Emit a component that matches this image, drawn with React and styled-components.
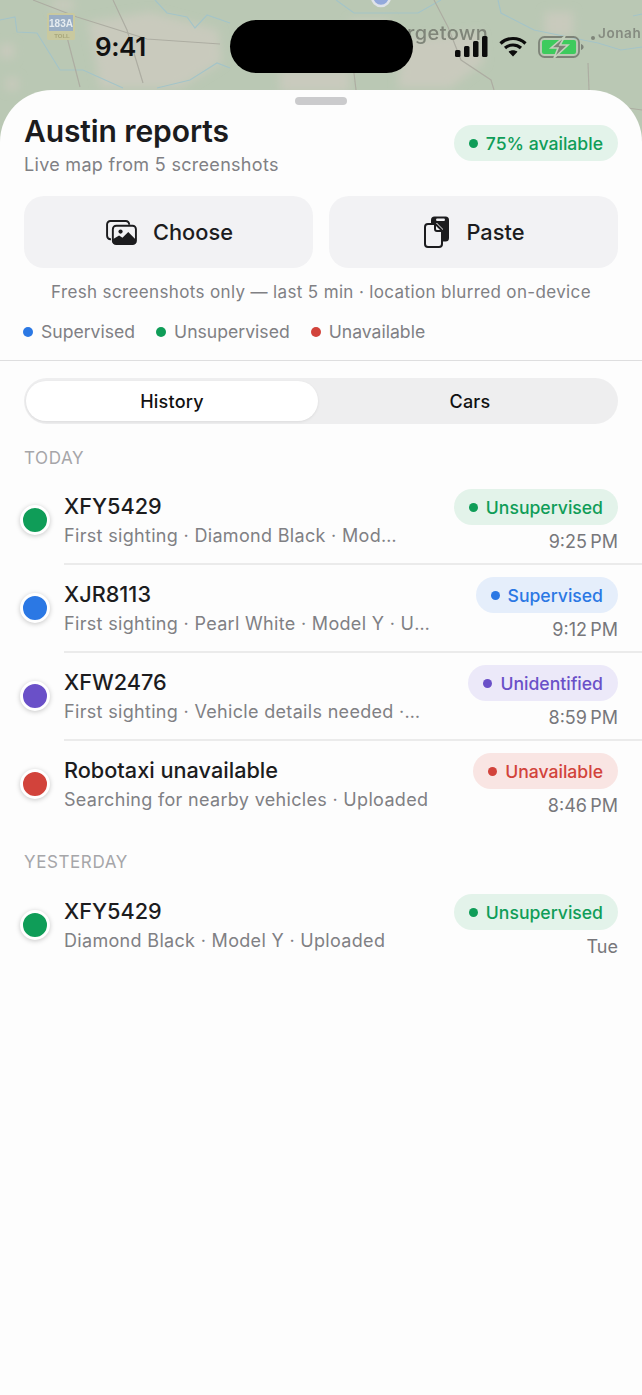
import React from 'react';
import styled, {createGlobalStyle} from 'styled-components';

const GlobalStyle = createGlobalStyle`
    * { box-sizing: border-box; }
    html, body { margin: 0; padding: 0; background: #fdfdfd; }
    body {
        font-family: Inter, "Noto Sans", "Liberation Sans", sans-serif;
        color: #1c1c1e;
        -webkit-font-smoothing: antialiased;
    }
`

const Page = styled.div`
    position: relative;
    width: 642px;
    height: 1395px;
    overflow: hidden;
    background: #fdfdfd;
`

const MapLayer = styled.svg`
    position: absolute;
    top: 0;
    left: 0;
    width: 642px;
    height: 150px;
`

const StatusBar = styled.div`
    position: relative;
    height: 90px;
    padding-top: 20px;
    display: grid;
    grid-template-columns: 230px 183px 1fr;
`

const Clock = styled.div`
    padding: 11px 0 0 95px;
    font-size: 26px;
    line-height: 32px;
    font-weight: 600;
    letter-spacing: -0.4px;
    color: #111;
`

const Island = styled.div`
    height: 53px;
    border-radius: 27px;
    background: #000;
`

const StatusIcons = styled.div`
    display: flex;
    align-items: center;
    height: 53px;
    padding-left: 42px;
    gap: 11px;
`

const Sheet = styled.div`
    position: relative;
    min-height: 1305px;
    border-radius: 52px 52px 0 0;
    background: #fdfdfd;
    padding-top: 7px;
`

const Handle = styled.div`
    width: 52px;
    height: 8px;
    margin: 0 auto;
    border-radius: 4px;
    background: #cbcbcd;
`

const Header = styled.div`
    display: flex;
    justify-content: space-between;
    padding: 8px 24px 0;
`

const Title = styled.h1`
    margin: 0;
    font-size: 30px;
    line-height: 36px;
    font-weight: 600;
    letter-spacing: -0.1px;
    color: #1c1c1e;
`

const Subtitle = styled.p`
    margin: 4px 0 0;
    font-size: 18px;
    line-height: 24px;
    letter-spacing: 0.3px;
    color: #808084;
`

const tones = {
    green: {fg: '#0f9d58', bg: '#e3f3ea'},
    blue: {fg: '#2b78e4', bg: '#e5eefb'},
    purple: {fg: '#6a50c8', bg: '#ece9f9'},
    red: {fg: '#d2433b', bg: '#f9e5e3'},
}

const Pill = styled.div`
    display: inline-flex;
    align-items: center;
    flex-shrink: 0;
    height: 36px;
    padding: 0 15px;
    gap: 8px;
    border-radius: 18px;
    font-size: 17.6px;
    font-weight: 500;
    white-space: nowrap;
    color: ${p => tones[p.$tone].fg};
    background: ${p => tones[p.$tone].bg};
`

const HeaderPill = styled(Pill)`
    margin-top: 12px;
`

const PillDot = styled.span`
    width: 9px;
    height: 9px;
    border-radius: 50%;
    background: currentColor;
`

const Actions = styled.div`
    display: grid;
    grid-template-columns: 1fr 1fr;
    gap: 16px;
    padding: 0 24px;
    margin-top: 19px;
`

const ActionButton = styled.button`
    display: flex;
    align-items: center;
    justify-content: center;
    gap: 16px;
    height: 72px;
    padding: 0 0 0 2px;
    border: 0;
    border-radius: 20px;
    background: #f2f2f4;
    color: #1c1c1e;
    font-family: inherit;
    font-size: 21.8px;
    font-weight: 500;
`

const Note = styled.p`
    margin: 12px 0 0;
    text-align: center;
    font-size: 17px;
    line-height: 24px;
    letter-spacing: 0.36px;
    color: #808084;
`

const Legend = styled.div`
    display: flex;
    gap: 21px;
    padding: 0 24px 16px 23px;
    margin-top: 16px;
    border-bottom: 1px solid #dededf;
`

const LegendItem = styled.div`
    display: flex;
    align-items: center;
    gap: 8px;
    font-size: 17.6px;
    line-height: 24px;
    color: #808084;
`

const LegendDot = styled.span`
    width: 10px;
    height: 10px;
    border-radius: 50%;
    background: ${p => tones[p.$tone].fg};
`

const Segments = styled.div`
    display: grid;
    grid-template-columns: 292px 1fr;
    height: 46px;
    margin: 17px 24px 0;
    padding: 3px 0 3px 2px;
    border-radius: 23px;
    background: #eeeeef;
`

const Segment = styled.div`
    display: flex;
    align-items: center;
    justify-content: center;
    border-radius: 20px;
    font-size: 18px;
    font-weight: 500;
    letter-spacing: 0.2px;
    color: #111;
    padding-left: ${p => (p.$active ? 0 : 4)}px;
    background: ${p => (p.$active ? '#fff' : 'transparent')};
    box-shadow: ${p => (p.$active ? '0 1px 3px rgba(0, 0, 0, 0.08)' : 'none')};
`

const GroupLabel = styled.div`
    padding: 0 24px;
    margin: ${p => p.$top}px 0 ${p => p.$bottom}px;
    font-size: 17px;
    line-height: 22px;
    letter-spacing: 0.6px;
    color: #a6a6a9;
`

const Row = styled.div`
    display: flex;
    align-items: center;
    gap: 14px;
    height: 88px;
    padding-left: 20px;
`

const MarkerDot = styled.span`
    flex-shrink: 0;
    width: 30px;
    height: 30px;
    margin-bottom: 2px;
    border: 3px solid #fff;
    border-radius: 50%;
    background: ${p => tones[p.$tone].fg};
    box-shadow: 0 1px 5px rgba(0, 0, 0, 0.22);
`

const RowBody = styled.div`
    flex: 1;
    min-width: 0;
    height: 100%;
    display: flex;
    justify-content: space-between;
    gap: 30px;
    padding: 12px 24px 0 0;
    border-bottom: ${p => (p.$last ? '0' : '2px solid #ebebeb')};
`

const RowText = styled.div`
    min-width: 0;
    padding-top: 4px;
`

const RowTitle = styled.div`
    font-size: 21.7px;
    line-height: 26px;
    font-weight: 500;
    color: #1c1c1e;
`

const RowSub = styled.div`
    margin-top: 4px;
    max-width: ${p => p.$clip || 400}px;
    font-size: 18px;
    line-height: 26px;
    letter-spacing: 0.32px;
    color: #808084;
    white-space: nowrap;
    overflow: hidden;
    text-overflow: ellipsis;
`

const RowMeta = styled.div`
    display: flex;
    flex-direction: column;
    align-items: flex-end;
    flex-shrink: 0;
`

const RowTime = styled.div`
    margin-top: 6px;
    font-size: 18px;
    line-height: 22px;
    color: #77777b;
`

const PhotosIcon = () => (
    <svg width="31" height="25" viewBox="0 0 32 26" fill="none">
        <path d="M5 20H4.500A3.500 3.500 0 0 1 1 16.500V4.500A3.500 3.500 0 0 1 4.500 1H20.500A3.500 3.500 0 0 1 24 4.500V5" stroke="#1c1c1e" strokeWidth="2" />
        <rect x="7" y="6" width="24" height="19" rx="3.500" stroke="#1c1c1e" strokeWidth="2" />
        <circle cx="15" cy="12" r="2.200" fill="#1c1c1e" />
        <path d="M7 20l6.500-4 3.500 2.500 6-6 8 8V22a3 3 0 0 1-3 3H10a3 3 0 0 1-3-3z" fill="#1c1c1e" />
    </svg>
)

const PasteIcon = () => (
    <svg width="26" height="32" viewBox="0 0 26 32" fill="none">
        <path d="M7 7V4a3.500 3.500 0 0 1 3.500-3.500h11A3.500 3.500 0 0 1 25 4v18a3.500 3.500 0 0 1-3.500 3.500H19V13l-6-6z" fill="#1c1c1e" />
        <rect x="12" y="2.500" width="9" height="2.400" rx="1.200" fill="#f2f2f4" />
        <path d="M4 8H11.500L18 14.500V28a3 3 0 0 1-3 3H4a3 3 0 0 1-3-3V11a3 3 0 0 1 3-3z" fill="#f2f2f4" stroke="#1c1c1e" strokeWidth="2" />
        <path d="M11 8.500V13a2 2 0 0 0 2 2h4.500" stroke="#1c1c1e" strokeWidth="2" />
    </svg>
)

const SignalIcon = () => (
    <svg width="33" height="21" viewBox="0 0 33 21" fill="#0c0c0c">
        <rect x="0" y="14" width="5.500" height="7" rx="1.500" />
        <rect x="9" y="10" width="5.500" height="11" rx="1.500" />
        <rect x="18" y="5" width="5.500" height="16" rx="1.500" />
        <rect x="27" y="0" width="5.500" height="21" rx="1.500" />
    </svg>
)

const WifiIcon = () => (
    <svg width="28" height="21" viewBox="0 0 28 21" fill="none" stroke="#0c0c0c" strokeWidth="3.200">
        <path d="M1.500 7.500C8.500 .8 19.500 .8 26.500 7.500" />
        <path d="M6 12c4.500-4 11.500-4 16 0" />
        <path d="M14 20.500L9.500 15.800c2.600-2 6.400-2 9 0z" fill="#0c0c0c" stroke="none" />
    </svg>
)

const BatteryIcon = () => (
    <svg width="46" height="22" viewBox="0 0 46 22">
        <rect x="1" y="1" width="40" height="20" rx="5.500" fill="none" stroke="#7d8378" strokeWidth="1.800" />
        <path d="M4 6a2 2 0 0 1 2-2h30a2 2 0 0 1 2 2v10a2 2 0 0 1-2 2H6a2 2 0 0 1-2-2z" fill="#3dcb5d" />
        <path d="M43 8v6c1.600-.5 2.600-1.600 2.600-3s-1-2.500-2.600-3z" fill="#7d8378" />
        <path d="M27 0L13 12h7l-4 10 14-13h-8z" fill="#7d8378" stroke="#c3d0bc" strokeWidth="1.600" />
    </svg>
)

const MapArt = () => (
    <MapLayer viewBox="0 0 642 150">
        <defs>
            <filter id="soft"><feGaussianBlur stdDeviation="5" /></filter>
            <filter id="line"><feGaussianBlur stdDeviation="0.6" /></filter>
        </defs>
        <rect width="642" height="150" fill="#bac8b4" />
        <g filter="url(#soft)" fill="#c9cabd">
            <path d="M88 22L150 12L218 30L222 62L180 88H100L95 55z" />
            <path d="M402 40L480 32L484 62L450 88H398z" />
            <path d="M545 12h28v24h-28z" />
            <path d="M52 0h22v10H52z" />
            <path d="M0 44h14v14H0z" />
            <path d="M6 78h12v12H6z" />
            <path d="M280 70h70v22h-70z" />
            <path d="M350 20h40v22h-40z" />
        </g>
        <g filter="url(#line)">
            <g fill="none" stroke="#a4c4c8" strokeWidth="1.200">
                <path d="M0 20L15 17 17 32 37 33 60 70 83 70 123 88" />
                <path d="M155 0L167 13 187 17 195 28 207 15 230 23" />
                <path d="M157 88L190 80 217 63 230 68" />
                <path d="M336 0L354 13 391 13 418 13 441 0" />
                <path d="M498 0L501 13 534 30 568 37 598 43 621 50 642 47" />
                <path d="M633 16L642 14" />
            </g>
            <g fill="none" stroke="#adada2" strokeWidth="1.200">
                <path d="M33 0L77 17 147 39 220 44" />
                <path d="M113 0L127 30 143 83" />
                <path d="M67 37L80 87" />
                <path d="M434 0L448 27 461 60 491 80 494 90" />
                <path d="M354 73L356 90" />
                <path d="M588 63L589 90" />
                <path d="M621 107L642 110" />
            </g>
            <circle cx="381" cy="-3" r="9" fill="#93a9dc" stroke="#dfe3e9" strokeWidth="2.500" />
            <rect x="47" y="13" width="28" height="27" rx="2" fill="#c9c99f" />
            <rect x="49" y="15" width="24" height="16" fill="#9aaec4" />
            <text x="61" y="27" textAnchor="middle" fontSize="10" fontWeight="700" fill="#e6ecf0" fontFamily="Liberation Sans, sans-serif">183A</text>
            <text x="62" y="38" textAnchor="middle" fontSize="6" fontWeight="700" fill="#a8a67a" fontFamily="Liberation Sans, sans-serif">TOLL</text>
            <text x="367" y="40" fontSize="20" fontWeight="500" letterSpacing="0.4" fill="#7f8579" fontFamily="Inter, sans-serif">Georgetown</text>
            <circle cx="593" cy="38" r="2" fill="#7f8579" />
            <text x="598" y="38" fontSize="13.500" fontWeight="600" letterSpacing="0.6" fill="#858b80" fontFamily="Inter, sans-serif">Jonah</text>
        </g>
    </MapLayer>
)

const legend = [
    {tone: 'blue', label: 'Supervised'},
    {tone: 'green', label: 'Unsupervised'},
    {tone: 'red', label: 'Unavailable'},
]

const today = [
    {tone: 'green', title: 'XFY5429', sub: 'First sighting · Diamond Black · Model Y · Uploaded', clip: 335, status: 'Unsupervised', time: '9:25\u202FPM'},
    {tone: 'blue', title: 'XJR8113', sub: 'First sighting · Pearl White · Model Y · Uploaded', clip: 366, status: 'Supervised', time: '9:12\u202FPM'},
    {tone: 'purple', title: 'XFW2476', sub: 'First sighting · Vehicle details needed · Uploaded', clip: 357, status: 'Unidentified', time: '8:59\u202FPM'},
    {tone: 'red', title: 'Robotaxi unavailable', sub: 'Searching for nearby vehicles · Uploaded', status: 'Unavailable', time: '8:46\u202FPM'},
]

const yesterday = [
    {tone: 'green', title: 'XFY5429', sub: 'Diamond Black · Model Y · Uploaded', status: 'Unsupervised', time: 'Tue'},
]

const ReportRow = ({item, last}) => (
    <Row>
        <MarkerDot $tone={item.tone} />
        <RowBody $last={last}>
            <RowText>
                <RowTitle>{item.title}</RowTitle>
                <RowSub $clip={item.clip}>{item.sub}</RowSub>
            </RowText>
            <RowMeta>
                <Pill $tone={item.tone}><PillDot />{item.status}</Pill>
                <RowTime>{item.time}</RowTime>
            </RowMeta>
        </RowBody>
    </Row>
)

const App = () => (
    <Page>
        <GlobalStyle />
        <MapArt />
        <StatusBar>
            <Clock>9:41</Clock>
            <Island />
            <StatusIcons>
                <SignalIcon />
                <WifiIcon />
                <BatteryIcon />
            </StatusIcons>
        </StatusBar>
        <Sheet>
            <Handle />
            <Header>
                <div>
                    <Title>Austin reports</Title>
                    <Subtitle>Live map from 5 screenshots</Subtitle>
                </div>
                <HeaderPill $tone="green"><PillDot />75% available</HeaderPill>
            </Header>
            <Actions>
                <ActionButton><PhotosIcon />Choose</ActionButton>
                <ActionButton><PasteIcon />Paste</ActionButton>
            </Actions>
            <Note>Fresh screenshots only — last 5 min · location blurred on-device</Note>
            <Legend>
                {legend.map(l => (
                    <LegendItem key={l.label}><LegendDot $tone={l.tone} />{l.label}</LegendItem>
                ))}
            </Legend>
            <Segments>
                <Segment $active>History</Segment>
                <Segment>Cars</Segment>
            </Segments>
            <GroupLabel $top={23} $bottom={8}>TODAY</GroupLabel>
            {today.map((item, i) => <ReportRow key={item.title} item={item} last={i === today.length - 1} />)}
            <GroupLabel $top={22} $bottom={9}>YESTERDAY</GroupLabel>
            {yesterday.map(item => <ReportRow key={item.sub} item={item} last />)}
        </Sheet>
    </Page>
)

export default App
